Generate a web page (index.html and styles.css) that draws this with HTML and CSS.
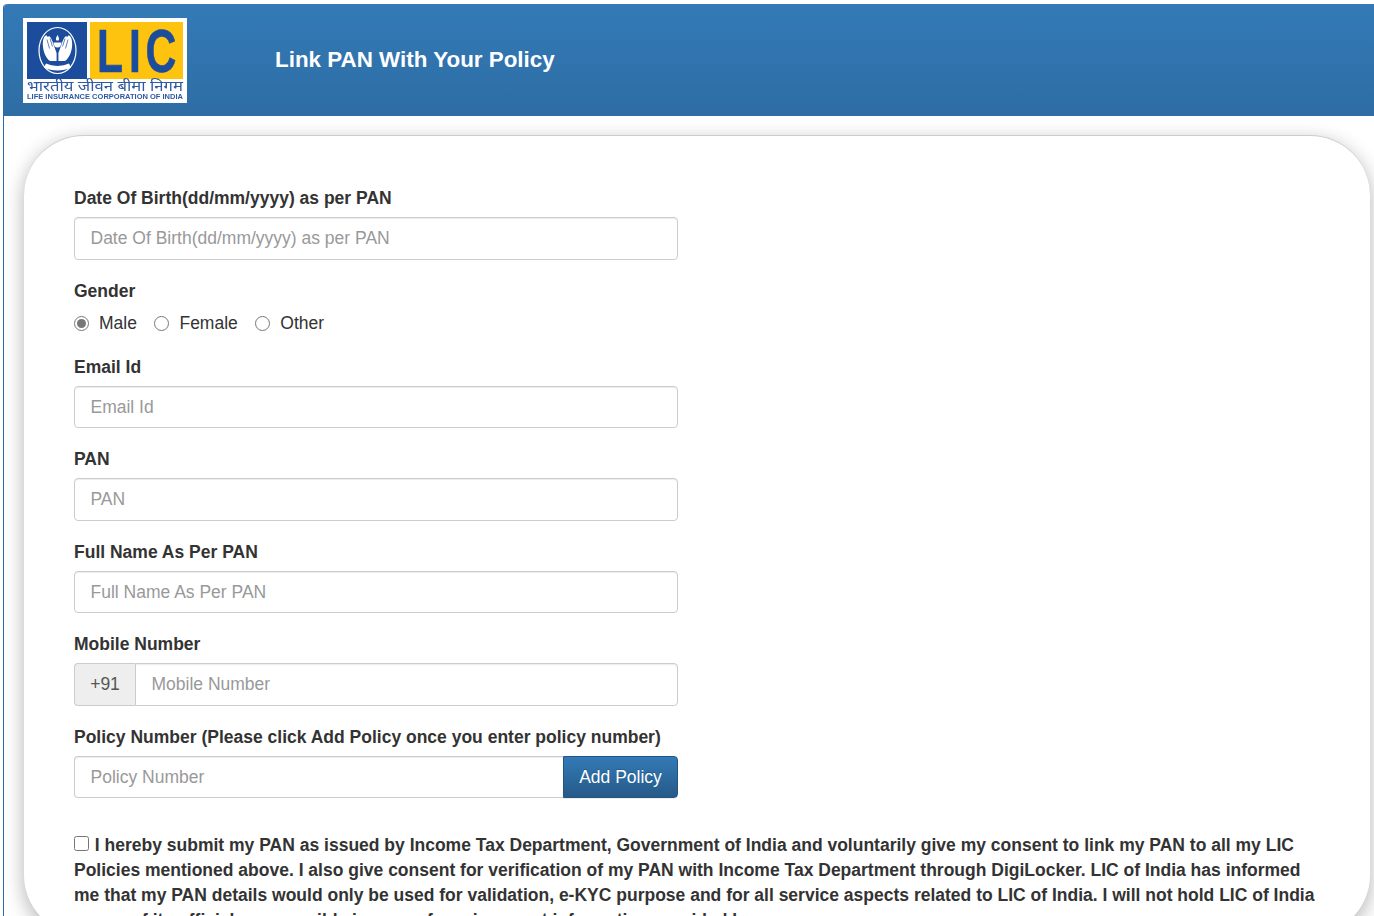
FILE: index.html
```html
<!DOCTYPE html>
<html lang="en">
<head>
<meta charset="utf-8">
<title>Link PAN With Your Policy</title>
<link rel="stylesheet" href="styles.css">
</head>
<body>
<div class="panel">
  <header class="panel-heading">
    <svg class="logo" width="164" height="85" viewBox="0 0 164 85" role="img" aria-label="LIC logo">
      <rect width="164" height="85" fill="#fff"/>
      <rect x="4" y="4" width="60" height="57" fill="#1c4c9c"/>
      <rect x="67" y="4" width="93" height="57" fill="#fdc30f"/>
      <ellipse cx="34.5" cy="32.5" rx="18.5" ry="23" fill="none" stroke="#fff" stroke-width="1.2"/>
      <path d="M33.6 43h-6.5c-4-2.5-6.6-8.500-7.200-15-.4-5 .8-10 3-10.500 1-.2 1.500.5 1.800 1.500.8-1 2-1 2.500 0 1.500 2 2.500 5 3.300 7.500l3.100 8.500z" fill="#fff"/>
      <path d="M35.400 43h6.500c4-2.500 6.600-8.500 7.200-15 .4-5-.8-10-3-10.500-1-.2-1.500.5-1.800 1.500-.8-1-2-1-2.500 0-1.500 2-2.500 5-3.300 7.500l-3.100 8.500z" fill="#fff"/>
      <path d="M34.500 17c1.200 2 2 3.500 1.200 5.500h-2.400c-.8-2 0-3.500 1.200-5.500zM30.500 24.500h8c0 3-1.500 5-4 5s-4-2-4-5z" fill="#fff"/>
      <path d="M24 21.500l2.500 9M27 20.500l2.500 8M45 21.500l-2.500 9M42 20.500l-2.500 8" stroke="#1c4c9c" stroke-width=".7" fill="none"/>
      <path d="M22 47.500c7 3.500 18 3.500 25 0" stroke="#fff" stroke-width="4.500" fill="none"/>
      <text class="logo-big" transform="scale(.7 1)" x="105.700 151.400 175" y="54">LIC</text>
      <text class="logo-hi" x="4" y="73" textLength="156" lengthAdjust="spacingAndGlyphs">भारतीय जीवन बीमा निगम</text>
      <text class="logo-en" x="4" y="81" textLength="156" lengthAdjust="spacingAndGlyphs">LIFE INSURANCE CORPORATION OF INDIA</text>
    </svg>
    <h1 class="title">Link PAN With Your Policy</h1>
  </header>
  <div class="panel-body">
    <form class="card">
      <div class="fields">
        <div class="form-group">
          <label class="label">Date Of Birth(dd/mm/yyyy) as per PAN</label>
          <input class="input" type="text" placeholder="Date Of Birth(dd/mm/yyyy) as per PAN">
        </div>
        <div class="form-group">
          <label class="label">Gender</label>
          <div class="radios">
            <label class="radio"><input type="radio" name="gender" checked> Male</label>
            <label class="radio"><input type="radio" name="gender"> Female</label>
            <label class="radio"><input type="radio" name="gender"> Other</label>
          </div>
        </div>
        <div class="form-group">
          <label class="label">Email Id</label>
          <input class="input" type="text" placeholder="Email Id">
        </div>
        <div class="form-group">
          <label class="label">PAN</label>
          <input class="input" type="text" placeholder="PAN">
        </div>
        <div class="form-group">
          <label class="label">Full Name As Per PAN</label>
          <input class="input" type="text" placeholder="Full Name As Per PAN">
        </div>
        <div class="form-group">
          <label class="label">Mobile Number</label>
          <div class="input-group">
            <span class="addon">+91</span>
            <input class="input joined-left" type="text" placeholder="Mobile Number">
          </div>
        </div>
        <div class="form-group">
          <label class="label">Policy Number (Please click Add Policy once you enter policy number)</label>
          <div class="input-group">
            <input class="input joined-right" type="text" placeholder="Policy Number">
            <button class="btn" type="button">Add Policy</button>
          </div>
        </div>
      </div>
      <label class="consent"><input class="check" type="checkbox"> I hereby submit my PAN as issued by Income Tax Department, Government of India and voluntarily give my consent to link my PAN to all my LIC Policies mentioned above. I also give consent for verification of my PAN with Income Tax Department through DigiLocker. LIC of India has informed me that my PAN details would only be used for validation, e-KYC purpose and for all service aspects related to LIC of India. I will not hold LIC of India or any of its officials responsible in case of any incorrect information provided by me.</label>
    </form>
  </div>
</div>
</body>
</html>
```
FILE: styles.css
```css
* { box-sizing: border-box; }
html, body { height: 916px; overflow: hidden; }
body {
  margin: 0;
  padding: 4px 0 0 3px;
  font-family: "Liberation Sans", Arial, sans-serif;
  font-size: 17.5px;
  line-height: 25px;
  color: #333;
  background: #fff;
}
.panel {
  border-left: 1px solid #2e6da4;
  border-top-left-radius: 4px;
  height: 912px;
}
.panel-heading {
  display: flex;
  align-items: center;
  height: 112px;
  padding-left: 19px;
  background: linear-gradient(#337ab7, #2e6da4);
  border-top-left-radius: 4px;
}
.logo { display: block; flex: none; filter: blur(.35px); }
.logo-big { font: 700 61px "Liberation Sans", sans-serif; fill: #1c4c9c; stroke: #1c4c9c; stroke-width: .6px; }
.logo-hi { font: 400 15px "Noto Sans", "Liberation Sans", sans-serif; fill: #2f5aa3; }
.logo-en { font: 700 6.8px "Liberation Sans", sans-serif; fill: #2f5aa3; }
.title {
  margin: 0 0 0 88px;
  font-size: 22.4px;
  font-weight: 700;
  line-height: 1.1;
  color: #fff;
}
.panel-body { padding: 19px 4px 0 20px; }
.card {
  padding: 51.2px 50px 0;
  height: 800px;
  background: #fff;
  border-radius: 60px;
  border-top: 1px solid #ccc;
  box-shadow: 0 6px 20px rgba(0, 0, 0, .3);
}
.fields { width: 604px; }
.form-group { margin-bottom: 20px; }
.label {
  display: block;
  margin-bottom: 5px;
  padding-bottom: 2px;
  line-height: 23px;
  font-weight: 700;
}
.input {
  display: block;
  width: 100%;
  height: 42.5px;
  padding: 6.5px 15.5px 5.5px;
  font: inherit;
  color: #555;
  background: #fff;
  border: 1px solid #ccc;
  border-radius: 4px;
  box-shadow: inset 0 1px 1px rgba(0, 0, 0, .075);
}
.input::placeholder { color: #999; opacity: 1; }
.radios { display: flex; gap: 17.5px; height: 26px; padding-top: 1.4px; align-items: flex-start; }
.radio { display: flex; align-items: center; gap: 10px; }
.radio input { width: 15px; height: 15px; margin: 0; accent-color: #777; }
.input-group { display: flex; }
.addon {
  flex: none;
  width: 61px;
  height: 42.5px;
  padding: 8px 0;
  text-align: center;
  background: #eee;
  border: 1px solid #ccc;
  border-right: 0;
  border-radius: 4px 0 0 4px;
  color: #555;
}
.joined-left { border-radius: 0 4px 4px 0; flex: 1; }
.joined-right { border-radius: 4px 0 0 4px; flex: 1; border-right: 0; }
.btn {
  flex: none;
  width: 115px;
  height: 42.5px;
  padding: 1px 0 0;
  font: inherit;
  color: #fff;
  text-shadow: 0 -1px 0 rgba(0, 0, 0, .2);
  background: linear-gradient(#337ab7, #265a88);
  border: 1px solid #245580;
  border-radius: 0 4px 4px 0;
  box-shadow: 0 1px 1px rgba(0, 0, 0, .075);
}
.consent {
  display: block;
  margin-top: 35px;
  width: 1250px;
  font-weight: 700;
}
.check { width: 15px; height: 15px; margin: 0 1px 2px 0; }
```
